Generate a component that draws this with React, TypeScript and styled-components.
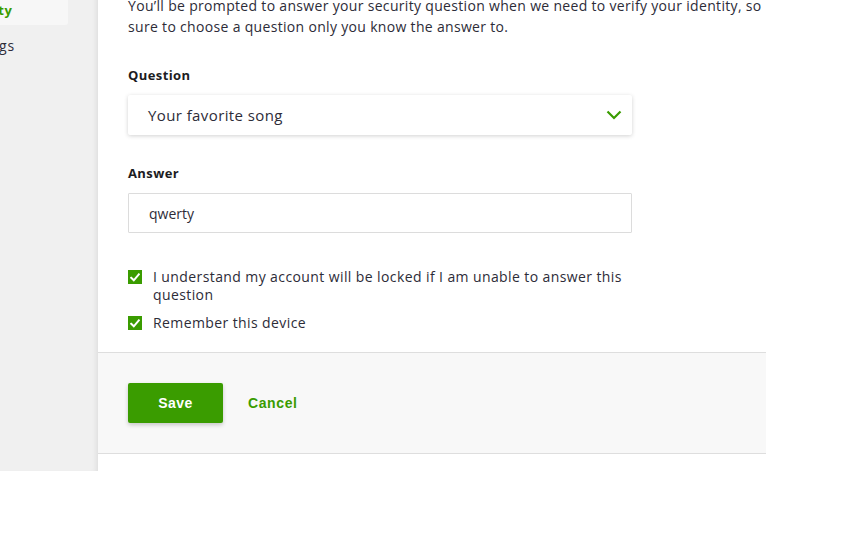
import React from "react";
import styled, { createGlobalStyle } from "styled-components";

const GREEN = "#3a9c00";

const Global = createGlobalStyle`
  html, body { margin: 0; padding: 0; background: #fff; overflow: hidden; }
  body { font-family: "Open Sans", "Liberation Sans", sans-serif; color: #2d2c38; }
  * { box-sizing: border-box; }
`;

const Viewport = styled.div`
  width: 864px;
  height: 540px;
  overflow: hidden;
`;

const Layout = styled.div`
  display: flex;
  align-items: stretch;
  margin-top: -5px;
  margin-left: -70px;
`;

const Sidebar = styled.nav`
  width: 168px;
  flex: none;
  background: #f0f0f0;
  box-shadow: inset -5px 0 5px -3px rgba(0, 0, 0, 0.07);
  display: flex;
  flex-direction: column;
`;

const NavItem = styled.div<{ $active?: boolean }>`
  width: 138px;
  height: 30px;
  padding-left: 26px;
  display: flex;
  align-items: center;
  font-size: ${(p) => (p.$active ? 13 : 14)}px;
  letter-spacing: ${(p) => (p.$active ? 0.4 : 0.9)}px;
  font-weight: ${(p) => (p.$active ? 700 : 400)};
  color: ${(p) => (p.$active ? GREEN : "#2d2c38")};
  background: ${(p) => (p.$active ? "#f7f7f7" : "transparent")};
  border-radius: 0 0 3px 0;
  margin-bottom: 5px;
`;

const Main = styled.main`
  width: 668px;
  flex: none;
  background: #fff;
  padding-bottom: 17px;
`;

const Body = styled.div`
  padding: 0 30px 20px 30px;
`;

const Intro = styled.p`
  margin: 0;
  font-size: 14px;
  line-height: 21px;
  letter-spacing: 0.32px;
  width: 640px;
  color: #2d2c38;
`;

const Label = styled.div<{ $gap: number }>`
  margin-top: ${(p) => p.$gap}px;
  font-size: 13px;
  line-height: 18px;
  font-weight: 700;
  letter-spacing: 0.4px;
  color: #1c1c22;
  margin-bottom: 11px;
`;

const Select = styled.div`
  width: 504px;
  height: 40px;
  border-radius: 2px;
  background: #fff;
  box-shadow: 0 1px 4px rgba(0, 0, 0, 0.18);
  display: flex;
  align-items: center;
  justify-content: space-between;
  padding: 0 10px 0 20px;
  font-size: 15px;
  letter-spacing: 0.4px;
  color: #2d2c38;
`;

const Input = styled.div`
  width: 504px;
  height: 40px;
  border: 1px solid #dcdcdc;
  border-radius: 1px;
  display: flex;
  align-items: center;
  padding-left: 20px;
  font-size: 14px;
  color: #2d2c38;
`;

const Checks = styled.div`
  margin-top: 35px;
  display: flex;
  flex-direction: column;
  gap: 10px;
`;

const CheckRow = styled.label`
  display: flex;
  align-items: flex-start;
  gap: 11px;
  font-size: 14px;
  line-height: 18px;
  letter-spacing: 0.4px;
  color: #2d2c38;
  width: 500px;
`;

const Box = styled.span`
  flex: none;
  width: 14px;
  height: 14px;
  margin-top: 2px;
  background: ${GREEN};
  display: flex;
  align-items: center;
  justify-content: center;
`;

const Footer = styled.div`
  border-top: 1px solid #dedede;
  border-bottom: 1px solid #dedede;
  background: #f8f8f8;
  padding: 30px;
  display: flex;
  align-items: center;
  gap: 25px;
`;

const SaveButton = styled.button`
  width: 95px;
  height: 40px;
  border: none;
  border-radius: 2px;
  background: ${GREEN};
  color: #fff;
  font-family: "Liberation Sans", Arial, sans-serif;
  font-weight: 700;
  font-size: 14px;
  letter-spacing: 0.5px;
  box-shadow: 0 2px 4px rgba(0, 0, 0, 0.2);
  padding: 0;
`;

const CancelLink = styled.a`
  font-family: "Liberation Sans", Arial, sans-serif;
  font-weight: 700;
  font-size: 14px;
  letter-spacing: 0.6px;
  color: ${GREEN};
  text-decoration: none;
`;

const Check = () => (
  <svg width="10" height="9" viewBox="0 0 10 9">
    <path d="M1.2 4.8 L3.8 7.3 L8.8 1.4" stroke="#fff" strokeWidth="2" fill="none" strokeLinecap="square" />
  </svg>
);

const Chevron = () => (
  <svg width="16" height="10" viewBox="0 0 16 10">
    <path d="M1.5 1.5 L8 8 L14.5 1.5" stroke={GREEN} strokeWidth="2.2" fill="none" />
  </svg>
);

export default function App() {
  return (
    <Viewport>
      <Global />
      <Layout>
        <Sidebar>
          <NavItem $active>Security</NavItem>
          <NavItem>Settings</NavItem>
        </Sidebar>
        <Main>
          <Body>
            <Intro>
              You’ll be prompted to answer your security question when we need to verify your identity, so
              sure to choose a question only you know the answer to.
            </Intro>
            <Label $gap={29}>Question</Label>
            <Select>
              <span>Your favorite song</span>
              <Chevron />
            </Select>
            <Label $gap={29}>Answer</Label>
            <Input>qwerty</Input>
            <Checks>
              <CheckRow>
                <Box><Check /></Box>
                <span>I understand my account will be locked if I am unable to answer this question</span>
              </CheckRow>
              <CheckRow>
                <Box><Check /></Box>
                <span>Remember this device</span>
              </CheckRow>
            </Checks>
          </Body>
          <Footer>
            <SaveButton>Save</SaveButton>
            <CancelLink>Cancel</CancelLink>
          </Footer>
        </Main>
      </Layout>
    </Viewport>
  );
}
